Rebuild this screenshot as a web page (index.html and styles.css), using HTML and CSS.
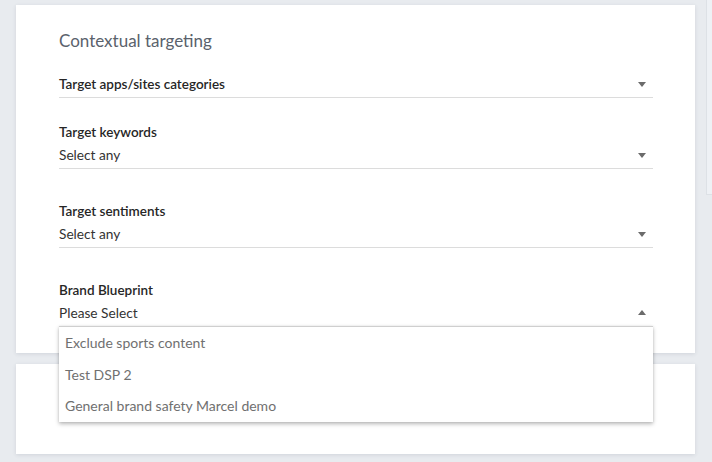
FILE: index.html
```html
<!DOCTYPE html>
<html>
<head>
<meta charset="utf-8">
<link rel="stylesheet" href="styles.css">
</head>
<body>
<div class="layout">
  <main class="main">
    <section class="card card-targeting">
      <h2 class="card-title">Contextual targeting</h2>
      <div class="field field-first">
        <div class="select">
          <span class="label">Target apps/sites categories</span>
          <span class="caret caret-down"></span>
        </div>
      </div>
      <div class="field field-second">
        <div class="label label-above">Target keywords</div>
        <div class="select">
          <span class="value">Select any</span>
          <span class="caret caret-down"></span>
        </div>
      </div>
      <div class="field">
        <div class="label label-above">Target sentiments</div>
        <div class="select">
          <span class="value">Select any</span>
          <span class="caret caret-down"></span>
        </div>
      </div>
      <div class="field">
        <div class="label label-above">Brand Blueprint</div>
        <div class="select select-open">
          <span class="value">Please Select</span>
          <span class="caret caret-up"></span>
          <ul class="menu">
            <li class="menu-item">Exclude sports content</li>
            <li class="menu-item">Test DSP 2</li>
            <li class="menu-item">General brand safety Marcel demo</li>
          </ul>
        </div>
      </div>
    </section>
    <section class="card card-empty"></section>
  </main>
  <aside class="side"></aside>
</div>
</body>
</html>
```

FILE: styles.css
```css
* { box-sizing: border-box; }
html, body {
  margin: 0;
  padding: 0;
}
body {
  width: 712px;
  height: 462px;
  overflow: hidden;
  background: #e8ebef;
  font-family: Lato, "Open Sans", sans-serif;
  color: #2b2b2b;
}
.layout {
  display: flex;
  align-items: flex-start;
  padding: 5px 0 0 16px;
}
.main {
  width: 679px;
  flex: none;
  display: flex;
  flex-direction: column;
  gap: 11px;
}
.card {
  background: #ffffff;
  box-shadow: 0 1px 4px rgba(40, 50, 70, 0.12);
}
.card-targeting {
  height: 348px;
  padding: 25px 42px 0 43px;
  position: relative;
  z-index: 2;
}
.card-empty {
  height: 90px;
}
.card-title {
  margin: 0;
  font-size: 17px;
  line-height: 22px;
  font-weight: 400;
  color: #5a626c;
}
.field { margin-top: 33px; }
.field-first { margin-top: 22px; }
.field-second { margin-top: 25px; }
.label {
  font-size: 13.5px;
  font-weight: 600;
  color: #262626;
}
.label-above {
  line-height: 18px;
  margin-bottom: 4px;
}
.select {
  position: relative;
  display: flex;
  justify-content: space-between;
  align-items: flex-start;
  height: 24px;
  line-height: 20px;
  padding: 0 7px 3px 0;
  border-bottom: 1px solid #dcdcdc;
  font-size: 13.7px;
}
.value {
  color: #333333;
}
.caret {
  width: 0;
  height: 0;
  margin-top: 8px;
  border-left: 4px solid transparent;
  border-right: 4px solid transparent;
}
.caret-down {
  border-top: 5px solid #6b6b6b;
}
.caret-up {
  margin-top: 7px;
  border-bottom: 5px solid #6b6b6b;
}
.menu {
  position: absolute;
  left: 0;
  right: 0;
  top: 23px;
  margin: 0;
  padding: 0;
  list-style: none;
  background: #ffffff;
  border-top: 1px solid #cfcfcf;
  box-shadow: 0 2px 4px rgba(0, 0, 0, 0.28), 0 0 2px rgba(0, 0, 0, 0.08);
  z-index: 5;
}
.menu-item {
  height: 31.7px;
  line-height: 32px;
  padding: 0 6px;
  font-size: 14px;
  color: #707070;
}
.side {
  flex: none;
  width: 20px;
  height: 195px;
  margin: -5px 0 0 11px;
  background: #eef1f5;
  border-left: 1px solid #dde1e6;
  border-bottom: 1px solid #dde1e6;
}
```
